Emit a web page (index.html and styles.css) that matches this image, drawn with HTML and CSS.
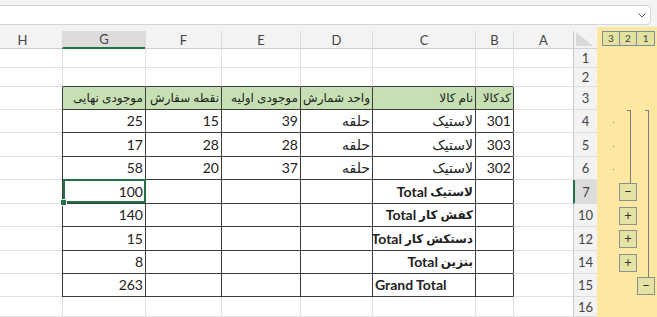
FILE: index.html
```html
<!DOCTYPE html>
<html lang="fa">
<head>
  <meta charset="UTF-8">
  <meta name="viewport" content="width=device-width, initial-scale=1.0">
  <title>موجودی انبار</title>
  <link rel="stylesheet" href="styles.css">
</head>
<body>
  <div class="formula-bar">
    <div class="formula-input">
      <svg class="chevron" width="8" height="5" viewBox="0 0 8 5"><polyline points="0.5,0.5 4,4 7.5,0.5" fill="none" stroke="#555" stroke-width="1"/></svg>
    </div>
  </div>

  <div class="main">
    <div class="sheet-wrap">
      <div class="sheet">
        <!-- column headers -->
        <div class="corner"></div>
        <div class="col-head">A</div>
        <div class="col-head">B</div>
        <div class="col-head">C</div>
        <div class="col-head">D</div>
        <div class="col-head">E</div>
        <div class="col-head">F</div>
        <div class="col-head sel">G</div>
        <div class="col-head">H</div>

        <!-- row 1 -->
        <div class="row-head">1</div>
        <div class="cell"></div><div class="cell"></div><div class="cell"></div><div class="cell"></div>
        <div class="cell"></div><div class="cell"></div><div class="cell"></div><div class="cell"></div>

        <!-- row 2 -->
        <div class="row-head">2</div>
        <div class="cell"></div>
        <div class="cell above"></div><div class="cell above"></div><div class="cell above"></div>
        <div class="cell above"></div><div class="cell above"></div><div class="cell above"></div>
        <div class="cell"></div>

        <!-- row 3: table header -->
        <div class="row-head">3</div>
        <div class="cell edge"></div>
        <div class="cell th">کدکالا</div>
        <div class="cell th">نام کالا</div>
        <div class="cell th">واحد شمارش</div>
        <div class="cell th">موجودی اولیه</div>
        <div class="cell th">نقطه سفارش</div>
        <div class="cell th">موجودی نهایی</div>
        <div class="cell"></div>

        <!-- row 4 -->
        <div class="row-head">4</div>
        <div class="cell edge"></div>
        <div class="cell tb">301</div>
        <div class="cell tb">لاستیک</div>
        <div class="cell tb">حلقه</div>
        <div class="cell tb">39</div>
        <div class="cell tb">15</div>
        <div class="cell tb">25</div>
        <div class="cell"></div>

        <!-- row 5 -->
        <div class="row-head">5</div>
        <div class="cell edge"></div>
        <div class="cell tb">303</div>
        <div class="cell tb">لاستیک</div>
        <div class="cell tb">حلقه</div>
        <div class="cell tb">28</div>
        <div class="cell tb">28</div>
        <div class="cell tb">17</div>
        <div class="cell"></div>

        <!-- row 6 -->
        <div class="row-head">6</div>
        <div class="cell edge"></div>
        <div class="cell tb">302</div>
        <div class="cell tb">لاستیک</div>
        <div class="cell tb">حلقه</div>
        <div class="cell tb">37</div>
        <div class="cell tb">20</div>
        <div class="cell tb">58</div>
        <div class="cell"></div>

        <!-- row 7 -->
        <div class="row-head sel">7</div>
        <div class="cell edge"></div>
        <div class="cell tb"></div>
        <div class="cell tb bold">لاستیک <span class="en">Total</span></div>
        <div class="cell tb"></div>
        <div class="cell tb"></div>
        <div class="cell tb"></div>
        <div class="cell tb active">100</div>
        <div class="cell"></div>

        <!-- row 10 -->
        <div class="row-head">10</div>
        <div class="cell edge"></div>
        <div class="cell tb"></div>
        <div class="cell tb bold">کفش کار <span class="en">Total</span></div>
        <div class="cell tb"></div>
        <div class="cell tb"></div>
        <div class="cell tb"></div>
        <div class="cell tb">140</div>
        <div class="cell"></div>

        <!-- row 12 -->
        <div class="row-head">12</div>
        <div class="cell edge"></div>
        <div class="cell tb"></div>
        <div class="cell tb bold">دستکش کار <span class="en">Total</span></div>
        <div class="cell tb"></div>
        <div class="cell tb"></div>
        <div class="cell tb"></div>
        <div class="cell tb">15</div>
        <div class="cell"></div>

        <!-- row 14 -->
        <div class="row-head">14</div>
        <div class="cell edge"></div>
        <div class="cell tb"></div>
        <div class="cell tb bold">بنزین <span class="en">Total</span></div>
        <div class="cell tb"></div>
        <div class="cell tb"></div>
        <div class="cell tb"></div>
        <div class="cell tb">8</div>
        <div class="cell"></div>

        <!-- row 15 -->
        <div class="row-head">15</div>
        <div class="cell edge"></div>
        <div class="cell tb"></div>
        <div class="cell tb bold ltr">Grand Total</div>
        <div class="cell tb"></div>
        <div class="cell tb"></div>
        <div class="cell tb"></div>
        <div class="cell tb">263</div>
        <div class="cell"></div>

        <!-- row 16 -->
        <div class="row-head">16</div>
        <div class="cell"></div><div class="cell"></div><div class="cell"></div><div class="cell"></div>
        <div class="cell"></div><div class="cell"></div><div class="cell"></div><div class="cell"></div>
      </div>
    </div>

    <!-- outline (group) bar -->
    <div class="outline">
      <div class="levels">
        <div class="lvl">3</div>
        <div class="lvl">2</div>
        <div class="lvl">1</div>
      </div>

      <span class="dot r4"></span>
      <span class="dot r5"></span>
      <span class="dot r6"></span>

      <div class="bracket lv2"></div>
      <div class="bracket lv1"></div>

      <div class="btn lv2 r7">−</div>
      <div class="btn lv2 r10">+</div>
      <div class="btn lv2 r12">+</div>
      <div class="btn lv2 r14">+</div>
      <div class="btn lv1 r15">−</div>
    </div>
  </div>
</body>
</html>
```

FILE: styles.css
```css
body {
  margin: 0;
  width: 657px;
  height: 317px;
  overflow: hidden;
  background-color: #f3f3f3;
  font-family: Lato, "DejaVu Sans", sans-serif;
  color: #222;
}

/* formula bar */
.formula-bar {
  height: 27px;
  box-sizing: border-box;
  padding: 5px 6px 2px 0;
}
.formula-input {
  height: 20px;
  box-sizing: border-box;
  background-color: #fff;
  border: 1px solid #d4d4d4;
  border-left: none;
  border-radius: 0 5px 5px 0;
  display: flex;
  align-items: center;
  justify-content: flex-end;
  padding-right: 4px;
}

.main {
  display: flex;
  height: 290px;
}

/* sheet */
.sheet-wrap {
  flex: 1;
  overflow: hidden;
  padding-top: 4px;
  direction: rtl;
}
.sheet {
  display: grid;
  grid-template-columns: 24px 60px 38px 103px 72px 79px 76px 83px 80px;
  grid-template-rows: 18px 19px 19px 23px 23px 24px 23px 24px 23px 24px 23px 23px 20px;
}
.sheet > div {
  box-sizing: border-box;
  min-width: 0;
}

.corner {
  position: relative;
  border-left: 1px solid #c8c8c8;
  border-bottom: 1px solid #d0d0d0;
}
.corner::after {
  content: "";
  position: absolute;
  left: 2px;
  bottom: 2px;
  width: 17px;
  height: 14px;
  background-color: #d9d9d9;
  clip-path: polygon(0 0, 0 100%, 100% 100%);
}

.col-head {
  display: flex;
  align-items: center;
  justify-content: center;
  font-size: 13px;
  color: #444;
  border-left: 1px solid #dadada;
  border-bottom: 1px solid #d0d0d0;
}
.col-head.sel {
  background-color: #dcdcdc;
  border-bottom: 2px solid #217346;
}

.row-head {
  display: flex;
  align-items: center;
  justify-content: center;
  font-size: 13px;
  color: #444;
  border-left: 1px solid #c8c8c8;
  border-bottom: 1px solid #dcdcdc;
}
.row-head.sel {
  background-color: #dcdcdc;
  border-left: 2px solid #217346;
}

.cell {
  background-color: #fff;
  border-left: 1px solid #e1e1e1;
  border-bottom: 1px solid #e1e1e1;
  display: flex;
  align-items: flex-end;
  padding: 0 2px 3px 2px;
  font-size: 14px;
  line-height: 16px;
  white-space: pre;
  overflow: hidden;
}
.cell.above {
  border-bottom-color: #3c3c3c;
}
.cell.edge {
  border-left-color: #3c3c3c;
}
.cell.th {
  background-color: #c6e0b4;
  border-left-color: #3c3c3c;
  border-bottom-color: #3c3c3c;
  font-size: 12px;
}
.cell.tb {
  border-left-color: #3c3c3c;
  border-bottom-color: #3c3c3c;
}
.cell.bold {
  font-weight: bold;
  font-size: 12px;
}
.cell.bold .en {
  font-size: 14px;
}
.cell.ltr {
  direction: ltr;
  font-size: 14px;
}

/* selected cell */
.cell.active {
  position: relative;
  overflow: visible;
}
.cell.active::after {
  content: "";
  position: absolute;
  top: -1px;
  right: -1px;
  bottom: 0;
  left: 0;
  border: 2px solid #217346;
}
.cell.active::before {
  content: "";
  position: absolute;
  left: -3px;
  bottom: -3px;
  width: 5px;
  height: 5px;
  background-color: #217346;
  border: 1px solid #fff;
  z-index: 1;
}

/* outline bar */
.outline {
  width: 60px;
  box-sizing: border-box;
  padding-top: 4px;
  background-color: #fde8a2;
  display: grid;
  grid-template-columns: 4px 18px 18px 18px 2px;
  grid-template-rows: 18px 19px 19px 23px 23px 24px 23px 24px 23px 24px 23px 23px 20px;
}
.levels {
  grid-column: 2 / 5;
  grid-row: 1;
  display: flex;
  height: 15px;
  margin-left: 1px;
}
.lvl {
  width: 18px;
  height: 15px;
  box-sizing: border-box;
  border: 1px solid #7f8c9c;
  background-color: #e3e2a0;
  font-size: 10px;
  line-height: 13px;
  text-align: center;
  color: #444;
}
.lvl + .lvl {
  border-left: none;
}

.dot {
  grid-column: 2;
  justify-self: end;
  align-self: center;
  width: 1px;
  height: 1px;
  margin: 2px 5px 0 0;
  background-color: #777;
}
.dot.r4 { grid-row: 5; }
.dot.r5 { grid-row: 6; }
.dot.r6 { grid-row: 7; }

.bracket {
  width: 4px;
  margin-left: 8px;
  margin-bottom: 20px;
  box-sizing: border-box;
  border-top: 1px solid #7d7d7d;
  border-right: 1px solid #7d7d7d;
}
.bracket.lv2 {
  grid-column: 3;
  grid-row: 5 / 9;
}
.bracket.lv1 {
  grid-column: 4;
  grid-row: 5 / 13;
}

.btn {
  width: 18px;
  height: 18px;
  box-sizing: border-box;
  align-self: center;
  border: 1px solid #8d9090;
  background-color: #e4e3a4;
  font-size: 13px;
  line-height: 15px;
  text-align: center;
  color: #333;
}
.btn.lv2 { grid-column: 3; }
.btn.lv1 { grid-column: 4; }
.btn.r7 { grid-row: 8; }
.btn.r10 { grid-row: 9; }
.btn.r12 { grid-row: 10; }
.btn.r14 { grid-row: 11; }
.btn.r15 { grid-row: 12; }
```
